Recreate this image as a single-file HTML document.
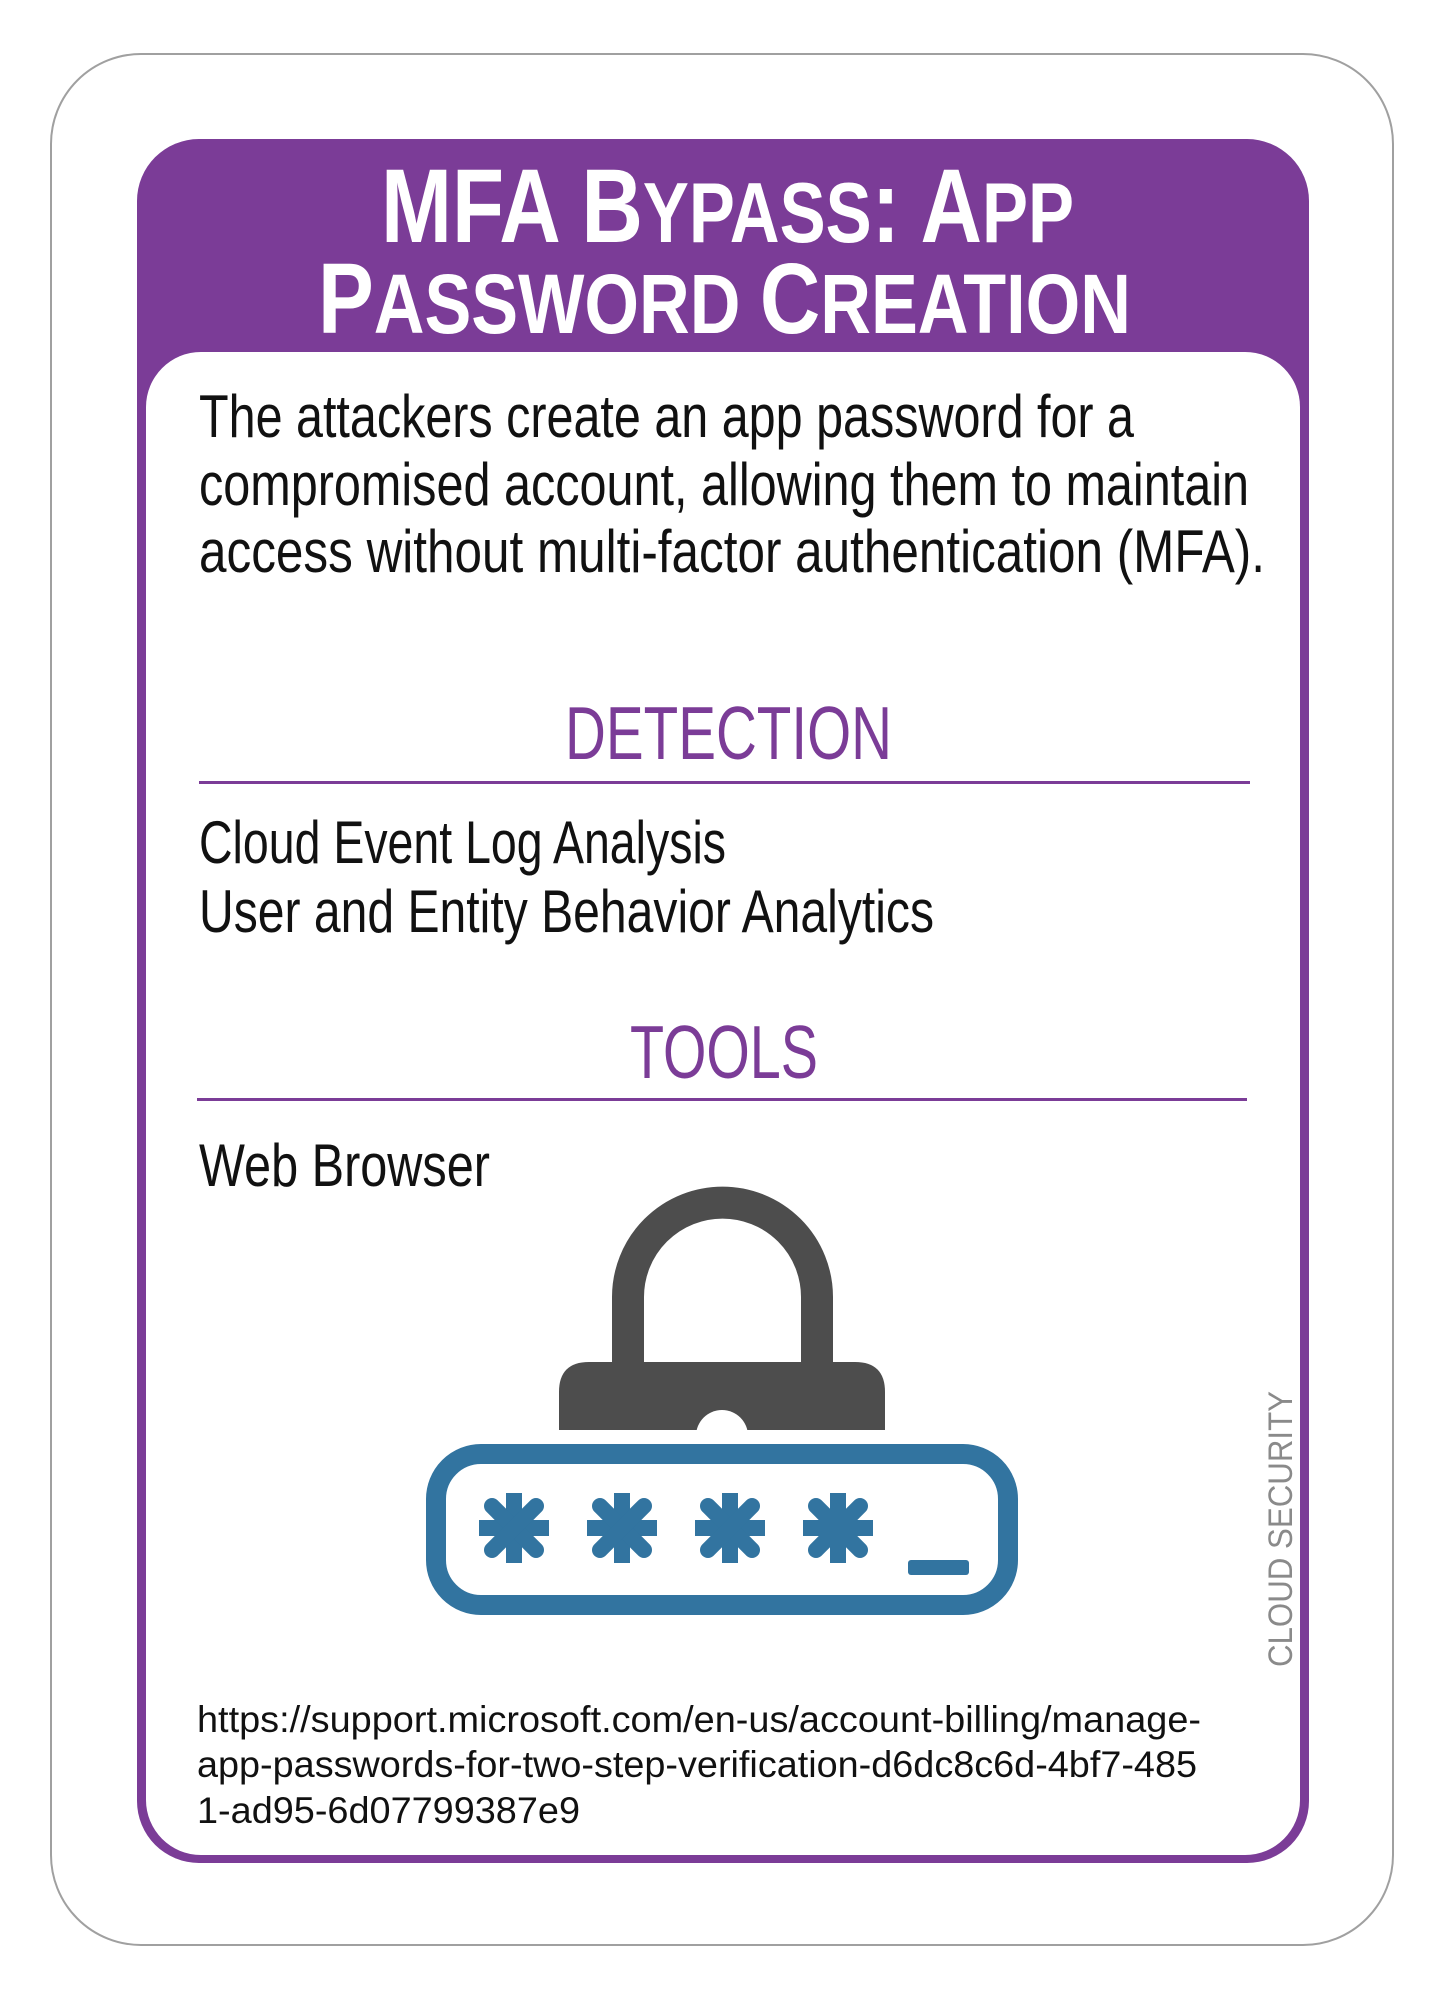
<!DOCTYPE html>
<html><head><meta charset="utf-8"><style>html,body{margin:0;padding:0;background:#fff}svg{display:block}</style></head>
<body>
<svg width="1449" height="2000" viewBox="0 0 1449 2000" xmlns="http://www.w3.org/2000/svg" font-family="'Liberation Sans', sans-serif">
<rect x="51" y="54" width="1342" height="1891" rx="90" fill="#fff" stroke="#a0a0a0" stroke-width="2"/>
<rect x="137" y="139" width="1172" height="1724" rx="62" fill="#7b3c97"/>
<rect x="146" y="352" width="1154" height="1503" rx="55" fill="#fff"/>

<g fill="#fff" font-weight="bold">
<text x="381" y="242" textLength="693" lengthAdjust="spacingAndGlyphs"><tspan font-size="105">MFA B</tspan><tspan font-size="85">YPASS</tspan><tspan font-size="105">: A</tspan><tspan font-size="85">PP</tspan></text>
<text x="318" y="333" textLength="813" lengthAdjust="spacingAndGlyphs"><tspan font-size="100">P</tspan><tspan font-size="84">ASSWORD </tspan><tspan font-size="100">C</tspan><tspan font-size="84">REATION</tspan></text>
</g>

<g fill="#111" font-size="60">
<text x="199" y="437" textLength="935" lengthAdjust="spacingAndGlyphs">The attackers create an app password for a</text>
<text x="199" y="505" textLength="1050" lengthAdjust="spacingAndGlyphs">compromised account, allowing them to maintain</text>
<text x="199" y="572" textLength="1066" lengthAdjust="spacingAndGlyphs">access without multi-factor authentication (MFA).</text>
<text x="199" y="863" textLength="527" lengthAdjust="spacingAndGlyphs">Cloud Event Log Analysis</text>
<text x="199" y="932" textLength="735" lengthAdjust="spacingAndGlyphs">User and Entity Behavior Analytics</text>
<text x="199" y="1186" textLength="291" lengthAdjust="spacingAndGlyphs">Web Browser</text>
</g>

<g fill="#7b3c97" font-size="75">
<text x="565" y="759" textLength="327" lengthAdjust="spacingAndGlyphs">DETECTION</text>
<text x="630" y="1078" textLength="188" lengthAdjust="spacingAndGlyphs">TOOLS</text>
</g>
<rect x="199" y="781" width="1051" height="3" fill="#7b3c97"/>
<rect x="197" y="1098" width="1050" height="3" fill="#7b3c97"/>

<path d="M628 1364 V1297 A94.5 94.5 0 0 1 817 1297 V1364" fill="none" stroke="#4d4d4d" stroke-width="32"/>
<path d="M559 1430 V1392 Q559 1362 589 1362 H855 Q885 1362 885 1392 V1430 Z" fill="#4d4d4d"/>
<circle cx="722" cy="1436" r="26" fill="#fff"/>
<rect x="436" y="1454" width="572" height="151" rx="45" fill="#fff" stroke="#3274a0" stroke-width="20"/>
<g stroke="#3274a0" stroke-width="16" stroke-linecap="round">
<g id="ast"><line x1="514" y1="1493" x2="514" y2="1563" stroke-linecap="butt"/><line x1="479" y1="1528" x2="549" y2="1528" stroke-linecap="butt"/><line x1="492" y1="1506" x2="536" y2="1550"/><line x1="536" y1="1506" x2="492" y2="1550"/></g>
<use href="#ast" transform="translate(108,0)"/>
<use href="#ast" transform="translate(216,0)"/>
<use href="#ast" transform="translate(324,0)"/>
</g>
<rect x="908" y="1560" width="61" height="15" rx="3" fill="#3274a0"/>

<text transform="translate(1292,1667) rotate(-90)" font-size="34" fill="#8a8a8a" textLength="276" lengthAdjust="spacingAndGlyphs">CLOUD SECURITY</text>

<g fill="#111" font-size="37">
<text x="197" y="1732" textLength="1004" lengthAdjust="spacingAndGlyphs">https://support.microsoft.com/en-us/account-billing/manage-</text>
<text x="197" y="1777" textLength="1000" lengthAdjust="spacingAndGlyphs">app-passwords-for-two-step-verification-d6dc8c6d-4bf7-485</text>
<text x="197" y="1823" textLength="383" lengthAdjust="spacingAndGlyphs">1-ad95-6d07799387e9</text>
</g>
</svg>
</body></html>
